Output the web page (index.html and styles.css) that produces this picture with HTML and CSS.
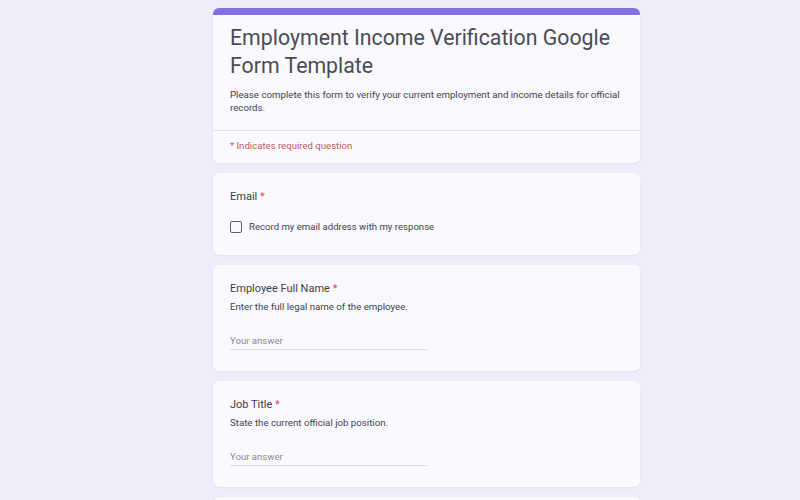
FILE: index.html
```html
<!DOCTYPE html>
<html lang="en">
<head>
  <meta charset="UTF-8">
  <meta name="viewport" content="width=device-width, initial-scale=1">
  <title>Employment Income Verification Google Form Template</title>
  <link rel="stylesheet" href="styles.css">
</head>
<body>
  <div class="form">
    <div class="card header">
      <div class="header-main">
        <h1>Employment Income Verification Google Form Template</h1>
        <p class="desc">Please complete this form to verify your current employment and income details for official records.</p>
      </div>
      <div class="required-note">* Indicates required question</div>
    </div>

    <div class="card email">
      <div class="q-title">Email <span class="req">*</span></div>
      <label class="check"><span class="box"></span> Record my email address with my response</label>
    </div>

    <div class="card">
      <div class="q-title">Employee Full Name <span class="req">*</span></div>
      <div class="q-help">Enter the full legal name of the employee.</div>
      <input type="text" class="answer" placeholder="Your answer">
    </div>

    <div class="card">
      <div class="q-title">Job Title <span class="req">*</span></div>
      <div class="q-help">State the current official job position.</div>
      <input type="text" class="answer" placeholder="Your answer">
    </div>

    <div class="card">
      <div class="q-title">Employer Name <span class="req">*</span></div>
      <div class="q-help">Name of the company or organization.</div>
      <input type="text" class="answer" placeholder="Your answer">
    </div>
  </div>
</body>
</html>
```

FILE: styles.css
```css
body { margin:0; background:#efedfb; font-family:Roboto, "Liberation Sans", sans-serif; color:#202124; }
.form { width:427px; margin-left:213px; padding-top:8px; display:flex; flex-direction:column; gap:10px; }
.card { background:#f9f9fe; border-radius:6px; box-shadow:0 1px 2px rgba(60,50,120,0.08); padding:16px 17px 21px; }
.header { padding:0; border-top:7px solid #8270e0; }
.header-main { padding:9px 17px 16px; border-bottom:1px solid #e3e1ec; }
h1 { margin:0; font-size:21.3px; font-weight:400; line-height:28px; color:#4d4c54; }
.desc { margin:8px 0 0; font-size:9.7px; line-height:13px; color:#44434a; }
.required-note { padding:8px 17px 10px; font-size:9.6px; line-height:14px; color:#c2595c; }
.q-title { font-size:11px; line-height:16px; color:#3f3e45; }
.req { color:#d0505a; }
.check { display:flex; align-items:center; gap:7px; margin-top:15px; font-size:9.6px; line-height:14px; color:#44434a; }
.box { width:10px; height:10px; border:1.5px solid #5f5e66; border-radius:2px; }
.q-help { margin-top:3px; font-size:9.7px; line-height:14px; color:#44434a; }
.answer { display:block; width:197px; margin-top:18px; padding:3px 0 3px; border:none; border-bottom:1px solid #dedde6; background:transparent; font:9.6px Roboto, sans-serif; color:#202124; outline:none; }
.answer::placeholder { color:#8a8990; }
```
